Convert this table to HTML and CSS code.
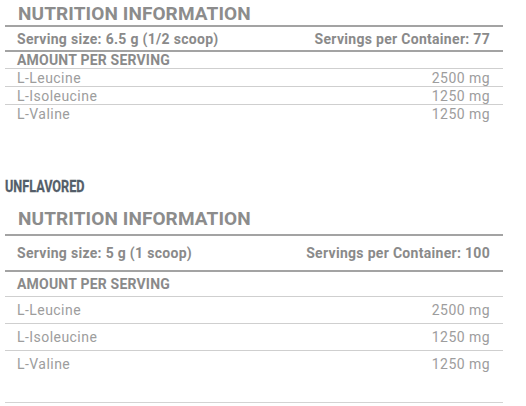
FILE: index.html
```html
<!DOCTYPE html>
<html>
<head>
<meta charset="utf-8">
<link rel="stylesheet" href="styles.css">
</head>
<body>
<section class="panel panel-compact">
  <h2 class="title">NUTRITION INFORMATION</h2>
  <div class="row row-serving">
    <span>Serving size: 6.5 g (1/2 scoop)</span>
    <span>Servings per Container: 77</span>
  </div>
  <div class="row row-amount"><span>AMOUNT PER SERVING</span></div>
  <div class="row row-item"><span>L-Leucine</span><span>2500 mg</span></div>
  <div class="row row-item"><span>L-Isoleucine</span><span>1250 mg</span></div>
  <div class="row row-item row-last"><span>L-Valine</span><span>1250 mg</span></div>
</section>

<h3 class="flavor"><span class="flavor-text">UNFLAVORED</span></h3>

<section class="panel panel-wide">
  <h2 class="title">NUTRITION INFORMATION</h2>
  <div class="row row-serving">
    <span>Serving size: 5 g (1 scoop)</span>
    <span>Servings per Container: 100</span>
  </div>
  <div class="row row-amount"><span>AMOUNT PER SERVING</span></div>
  <div class="row row-item"><span>L-Leucine</span><span>2500 mg</span></div>
  <div class="row row-item"><span>L-Isoleucine</span><span>1250 mg</span></div>
  <div class="row row-item row-last"><span>L-Valine</span><span>1250 mg</span></div>
</section>
</body>
</html>
```
FILE: styles.css
```css
html, body {
  margin: 0;
  padding: 0;
  background: #ffffff;
}

body {
  font-family: Roboto, "Liberation Sans", sans-serif;
  color: #9d9d9d;
  width: 526px;
  height: 406px;
  overflow: hidden;
}

.panel {
  margin-left: 5px;
  width: 498px;
}

.title {
  margin: 0;
  padding-left: 13px;
  font-size: 19px;
  font-weight: 700;
  color: #8c8c8c;
  letter-spacing: 0.1px;
  border-bottom: 2px solid #a3a3a3;
}

.row {
  display: flex;
  justify-content: space-between;
  align-items: center;
  padding: 0 13px 0 12px;
  font-size: 14px;
  letter-spacing: 0.45px;
}

.row-serving {
  font-weight: 700;
  color: #8a8a8a;
  letter-spacing: 0.3px;
  border-bottom: 2px solid #a3a3a3;
}

.row-amount {
  font-weight: 700;
  color: #8a8a8a;
  letter-spacing: 0.2px;
  border-bottom: 1px solid #cfcfcf;
}

.row-item {
  border-bottom: 1px solid #cfcfcf;
}

.row-last {
  border-bottom: none;
}

/* first (compact) table */
.panel-compact .title {
  height: 25px;
  line-height: 27px;
}
.panel-compact .row-serving { height: 22px; padding-top: 1px; }
.panel-compact .row-amount { height: 16px; }
.panel-compact .row-item { height: 17px; }

/* flavor label */
.flavor {
  margin: 57px 0 0 5px;
  height: 16px;
  line-height: 16px;
  font-size: 16px;
  font-weight: 700;
  color: #535d69;
}

.flavor-text {
  display: inline-block;
  transform: scaleX(0.79);
  transform-origin: left center;
  -webkit-text-stroke: 0.3px #535d69;
}

/* second (spacious) table */
.panel-wide {
  margin-top: 13px;
  border-bottom: 1px solid #d3d3d3;
  padding-bottom: 25px;
}
.panel-wide .title {
  height: 26px;
  line-height: 21px;
}
.panel-wide .row-serving { height: 34px; }
.panel-wide .row-amount { height: 24px; }
.panel-wide .row-item { height: 26px; }
.panel-wide .row-last { height: 26px; }
```
